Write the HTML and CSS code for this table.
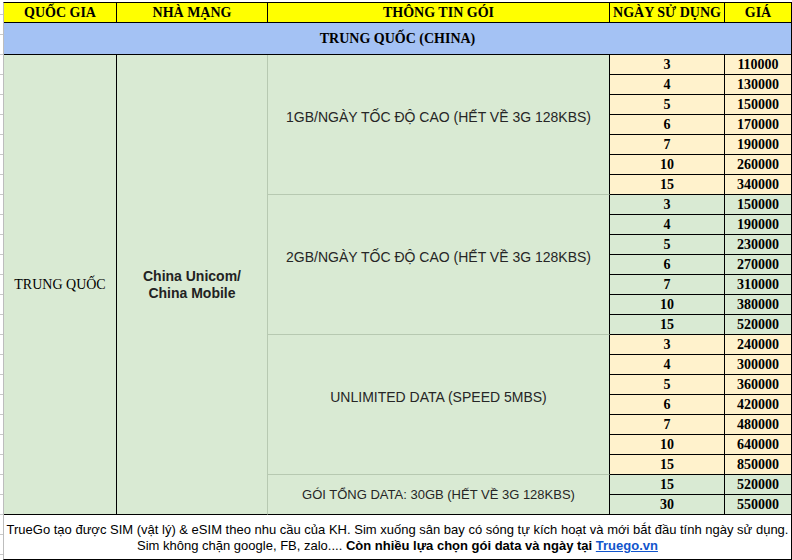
FILE: index.html
```html
<!DOCTYPE html>
<html lang="vi">
<head>
<meta charset="utf-8">
<title>TrueGo - Trung Quốc</title>
<link rel="stylesheet" href="styles.css">
</head>
<body>
<div class="page">
  <div class="sheet">
    <div class="hd">QUỐC GIA</div>
    <div class="hd">NHÀ MẠNG</div>
    <div class="hd">THÔNG TIN GÓI</div>
    <div class="hd">NGÀY SỬ DỤNG</div>
    <div class="hd">GIÁ</div>

    <div class="region">TRUNG QUỐC (CHINA)</div>

    <div class="country">TRUNG QUỐC</div>
    <div class="carrier">China Unicom/<br>China Mobile</div>

    <div class="pkg g1">1GB/NGÀY TỐC ĐỘ CAO (HẾT VỀ 3G 128KBS)</div>
    <div class="pkg g2">2GB/NGÀY TỐC ĐỘ CAO (HẾT VỀ 3G 128KBS)</div>
    <div class="pkg g3">UNLIMITED DATA (SPEED 5MBS)</div>
    <div class="pkg g4">GÓI TỔNG DATA: 30GB (HẾT VỀ 3G 128KBS)</div>

    <div class="v cream">3</div><div class="v cream">110000</div>
    <div class="v cream">4</div><div class="v cream">130000</div>
    <div class="v cream">5</div><div class="v cream">150000</div>
    <div class="v cream">6</div><div class="v cream">170000</div>
    <div class="v cream">7</div><div class="v cream">190000</div>
    <div class="v cream">10</div><div class="v cream">260000</div>
    <div class="v cream">15</div><div class="v cream">340000</div>

    <div class="v green">3</div><div class="v green">150000</div>
    <div class="v green">4</div><div class="v green">190000</div>
    <div class="v green">5</div><div class="v green">230000</div>
    <div class="v green">6</div><div class="v green">270000</div>
    <div class="v green">7</div><div class="v green">310000</div>
    <div class="v green">10</div><div class="v green">380000</div>
    <div class="v green">15</div><div class="v green">520000</div>

    <div class="v cream">3</div><div class="v cream">240000</div>
    <div class="v cream">4</div><div class="v cream">300000</div>
    <div class="v cream">5</div><div class="v cream">360000</div>
    <div class="v cream">6</div><div class="v cream">420000</div>
    <div class="v cream">7</div><div class="v cream">480000</div>
    <div class="v cream">10</div><div class="v cream">640000</div>
    <div class="v cream">15</div><div class="v cream">850000</div>

    <div class="v green">15</div><div class="v green">520000</div>
    <div class="v green">30</div><div class="v green">550000</div>
  </div>
  <div class="note">
    TrueGo tạo được SIM (vật lý) &amp; eSIM theo nhu cầu của KH. Sim xuống sân bay có sóng tự kích hoạt và mới bắt đầu tính ngày sử dụng.<br>
    Sim không chặn google, FB, zalo.... <b>Còn nhiều lựa chọn gói data và ngày tại <a href="#">Truego.vn</a></b>
  </div>
</div>
</body>
</html>
```

FILE: styles.css
```css
* { box-sizing: border-box; }
html, body { margin: 0; padding: 0; }
body {
  width: 792px;
  height: 560px;
  overflow: hidden;
  background-color: #ffffff;
  background-image: repeating-linear-gradient(to bottom, transparent 0, transparent 14px, #c8c8c8 14px, #c8c8c8 15px, transparent 15px, transparent 20px);
  background-size: 3px 100%;
  background-repeat: no-repeat;
}
.page {
  padding: 2px 0 0 3px;
}
.sheet {
  display: grid;
  grid-template-columns: 113px 151px 342px 115px 67px;
  grid-template-rows: 20px 32px repeat(23, 20px);
  border-top: 1px solid #000;
  border-left: 1px solid #bdbdbd;
  background: #d9ead3;
}
.sheet > div {
  border-right: 1px solid #000;
  border-bottom: 1px solid #000;
  display: flex;
  align-items: center;
  justify-content: center;
  text-align: center;
}
.hd {
  background: #ffff00;
  font-family: "Liberation Serif", "Times New Roman", serif;
  font-weight: bold;
  font-size: 14px;
  color: #000;
  white-space: nowrap;
}
.region {
  grid-column: 1 / -1;
  background: #a4c2f4;
  font-family: "Liberation Serif", "Times New Roman", serif;
  font-weight: bold;
  font-size: 14px;
  color: #000;
}
.country {
  grid-column: 1;
  grid-row: 3 / span 23;
  background: #d9ead3;
  font-family: "Liberation Serif", "Times New Roman", serif;
  font-size: 14px;
  color: #000;
}
.sheet > .carrier {
  grid-column: 2;
  grid-row: 3 / span 23;
  background: #d9ead3;
  border-right-color: #b7c9b1;
  font-family: "Liberation Sans", Arial, sans-serif;
  font-weight: bold;
  font-size: 14px;
  line-height: 17px;
  color: #222;
}
.pkg {
  grid-column: 3;
  background: #d9ead3;
  font-family: "Liberation Sans", Arial, sans-serif;
  font-size: 14px;
  color: #262626;
  white-space: nowrap;
}
.sheet > .g1, .sheet > .g2, .sheet > .g3 {
  border-bottom-color: #b7c9b1;
  padding-bottom: 16px;
}
.g1 { grid-row: 3 / span 7; }
.g2 { grid-row: 10 / span 7; }
.g3 { grid-row: 17 / span 7; }
.g4 { grid-row: 24 / span 2; font-size: 13px; }
.v {
  font-family: "Liberation Serif", "Times New Roman", serif;
  font-weight: bold;
  font-size: 14px;
  color: #000;
  padding-top: 1px;
}
.cream { background: #fff2cc; }
.green { background: #d9ead3; }
.note {
  height: 45px;
  border-left: 1px solid #bdbdbd;
  border-right: 1px solid #000;
  border-bottom: 1px solid #000;
  background: #fff;
  font-family: "Liberation Sans", Arial, sans-serif;
  font-size: 13px;
  line-height: 16px;
  color: #000;
  text-align: center;
  padding-top: 7px;
  white-space: nowrap;
}
.note a {
  color: #1155cc;
  text-decoration: underline;
}
```
